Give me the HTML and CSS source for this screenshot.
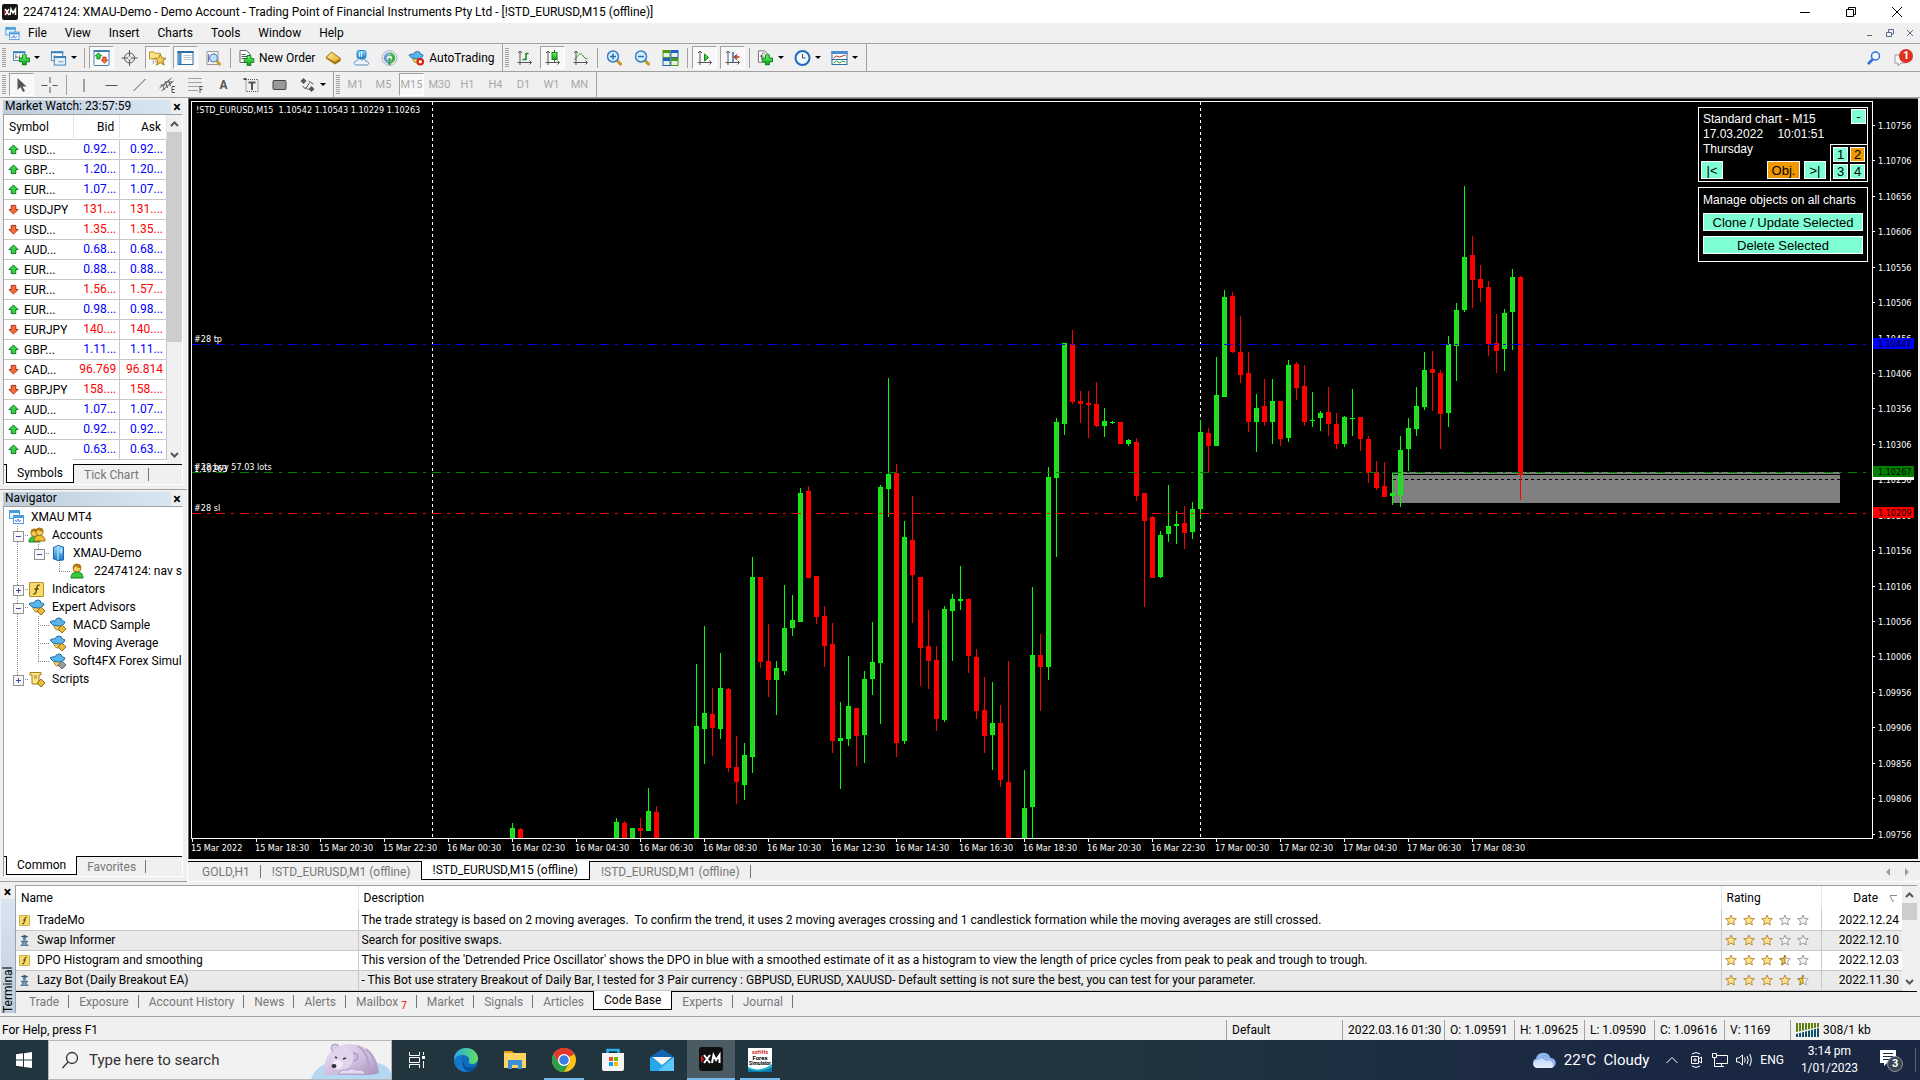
FILE: index.html
```html
<!DOCTYPE html>
<html lang="en">
<head>
  <meta charset="UTF-8">
  <title>22474124: XMAU-Demo - Demo Account</title>
  <meta name="viewport" content="width=device-width, initial-scale=1.0">
  <link rel="stylesheet" href="styles.css">
</head>
<body>
  <!-- Shared icons -->
  <svg class="defs" aria-hidden="true">
    <defs>
      <linearGradient id="gGreen" x1="0" y1="0" x2="0" y2="1"><stop offset="0" stop-color="#6dff6d"/><stop offset="1" stop-color="#0a9a1a"/></linearGradient>
      <linearGradient id="gGold" x1="0" y1="0" x2="1" y2="1"><stop offset="0" stop-color="#fff0a0"/><stop offset="1" stop-color="#e0a820"/></linearGradient>
      <linearGradient id="gBlue" x1="0" y1="0" x2="0" y2="1"><stop offset="0" stop-color="#9adcff"/><stop offset="1" stop-color="#1d78c8"/></linearGradient>
      <symbol id="up" viewBox="0 0 12 12"><path d="M6 1L11 6H8.500V10.500H3.500V6H1Z" fill="#35d04a" stroke="#126b1c"/></symbol>
      <symbol id="down" viewBox="0 0 12 12"><path d="M6 11L11 6H8.500V1.500H3.500V6H1Z" fill="#f8683a" stroke="#9c2a08"/></symbol>
      <symbol id="star" viewBox="0 0 12 12"><path d="M6 1L7.500 4.500L11.300 4.700L8.500 7.300L9.300 11L6 9L2.700 11L3.500 7.300L.7 4.700L4.500 4.500Z" fill="#ffe58a" stroke="#b88a3c"/></symbol>
      <symbol id="star0" viewBox="0 0 12 12"><path d="M6 1L7.500 4.500L11.300 4.700L8.500 7.300L9.300 11L6 9L2.700 11L3.500 7.300L.7 4.700L4.500 4.500Z" fill="#f4f4f4" stroke="#9a9a9a"/></symbol>
      <symbol id="starh" viewBox="0 0 12 12"><path d="M6 1L7.500 4.500L11.300 4.700L8.500 7.300L9.300 11L6 9L2.700 11L3.500 7.300L.7 4.700L4.500 4.500Z" fill="#fff" stroke="#a5a5a5"/><path d="M6 1V9L2.700 11L3.500 7.300L.7 4.700L4.500 4.500Z" fill="#f4c93c" stroke="#a87a20"/></symbol>
      <symbol id="fx" viewBox="0 0 14 14"><rect x=".5" y=".5" width="13" height="13" rx="1" fill="#f8dc68" stroke="#b8922c"/><path d="M10 3C7.500 2.500 7.500 4 7 7S6 11.500 4 11M5 6.500H9" fill="none" stroke="#55451a" stroke-width="1.300"/></symbol>
      <symbol id="hat" viewBox="0 0 18 16"><path d="M5 7H13Q13 13 9 13T5 7" fill="#f6d25a" stroke="#a5801c"/><path d="M1 5Q4 3 6 4Q7 1 10 1Q13 1 13 4Q15 4 16 5Q15 9 9 9T1 5Z" fill="#5ab6ea" stroke="#1f6fa8"/></symbol>
      <symbol id="ea" viewBox="0 0 18 16"><use href="#hat" width="18" height="16"/><path d="M13 8L17 12L13 16L9 12Z" fill="#e5b93c" stroke="#96701a"/></symbol>
      <symbol id="eagrey" viewBox="0 0 18 16"><use href="#hat" width="18" height="16"/><path d="M13 8L17 12L13 16L9 12Z" fill="#9a9a9a" stroke="#6a6a6a"/></symbol>
      <symbol id="robot" viewBox="0 0 14 14"><path d="M2 2L7 0L12 2L7 4Z" fill="#2e5d86"/><path d="M5 4H9V7H5Z" fill="#5d88aa"/><path d="M3 8H11L9 11L12 14H2L5 11Z" fill="#7ba0bd" stroke="#274f74"/></symbol>
      <symbol id="windows" viewBox="0 0 16 16"><rect x="1.500" y="1.500" width="10" height="8" fill="#e8f4ff" stroke="#4a9cdc"/><path d="M1 3H12" stroke="#4a9cdc" stroke-width="2"/><rect x="5.500" y="6.500" width="10" height="8" fill="#fff" stroke="#4a9cdc"/><path d="M5 8H16" stroke="#4a9cdc" stroke-width="2"/><path d="M7 11L8.500 13L10 10L11.500 13L13 11" fill="none" stroke="#5a78d8"/></symbol>
      <symbol id="plus" viewBox="0 0 12 12"><path d="M4 .5H8V4H11.500V8H8V11.500H4V8H.5V4H4Z" fill="url(#gGreen)" stroke="#0a7a14"/></symbol>
      <symbol id="axes" viewBox="0 0 16 16"><path d="M3.500 1V15M1 12.500H15M1.500 3L3.500 1L5.500 3M13 10.500L15 12.500L13 14.500" fill="none" stroke="#555"/></symbol>
      <symbol id="person" viewBox="0 0 14 16"><path d="M1 15Q1 9 7 9T13 15Z" fill="#36c83c" stroke="#15801c"/><circle cx="7" cy="5" r="4" fill="#f8cf58" stroke="#9c7210"/><path d="M3 5Q4 0 8 1T11 5Q7 5 6 3Q5 5 3 5" fill="#b07a10"/></symbol>
      <symbol id="golden" viewBox="0 0 14 16"><path d="M1 15Q1 9 7 9T13 15Z" fill="#f0c030" stroke="#8f6a10"/><circle cx="7" cy="5" r="4" fill="#f8cf58" stroke="#9c7210"/><path d="M3 5Q4 0 8 1T11 5Q7 5 6 3Q5 5 3 5" fill="#b07a10"/></symbol>
      <symbol id="lens" viewBox="0 0 16 16"><path d="M10 10L15 15" stroke="#c89a1c" stroke-width="3"/><circle cx="6.500" cy="6.500" r="5.500" fill="#d4efff" stroke="#3a80c0" stroke-width="1.500"/></symbol>
    </defs>
  </svg>

  <header class="titlebar">
    <svg class="app-icon" viewBox="0 0 16 16"><rect width="16" height="16" rx="2" fill="#151515"/><path d="M3 5L7 11M7 5L3 11M8 11L9 5L11 9L13.500 5V11" fill="none" stroke="#fff" stroke-width="1.500"/><path d="M2 6L4 9L2 11Z" fill="#e01818"/></svg>
    <h1>22474124: XMAU-Demo - Demo Account - Trading Point of Financial Instruments Pty Ltd - [!STD_EURUSD,M15 (offline)]</h1>
    <div class="window-buttons">
      <button aria-label="Minimize"><svg viewBox="0 0 10 10"><path d="M0 5.500H10"/></svg></button>
      <button aria-label="Restore"><svg viewBox="0 0 10 10"><path d="M.5 2.500H7.500V9.500H.5ZM2.500 2V.5H9.500V7.500H8"/></svg></button>
      <button aria-label="Close"><svg viewBox="0 0 10 10"><path d="M0 0L10 10M10 0L0 10"/></svg></button>
    </div>
  </header>

  <nav class="menubar">
    <svg class="menu-icon"><use href="#windows"/></svg>
    <button>File</button><button>View</button><button>Insert</button><button>Charts</button><button>Tools</button><button>Window</button><button>Help</button>
    <div class="child-buttons">
      <button aria-label="Minimize chart"><svg viewBox="0 0 8 8"><path d="M1 6.500H6"/></svg></button>
      <button aria-label="Restore chart"><svg viewBox="0 0 8 8"><path d="M.5 3.500H5.500V7.500H.5ZM2.500 3V.5H7.500V5H6"/></svg></button>
      <button aria-label="Close chart"><svg viewBox="0 0 8 8"><path d="M1 1L7 7M7 1L1 7"/></svg></button>
    </div>
  </nav>

  <div class="toolbar">
    <div class="group">
      <span class="grip"></span>
      <button class="tool wide" aria-label="New chart"><svg viewBox="0 0 18 16"><rect x=".5" y="1.500" width="12" height="9" fill="#fff" stroke="#3a80b8"/><path d="M0 2H13" stroke="#3a80b8" stroke-width="2"/><path d="M3 4V9M2 7H6M7 5V8" stroke="#777"/><use href="#plus" x="6" y="4" width="12" height="12"/></svg><i class="caret"></i></button>
      <button class="tool wide" aria-label="Profiles"><svg viewBox="0 0 18 16"><rect x="1.500" y="1.500" width="12" height="9" fill="#fff" stroke="#3a80b8"/><path d="M1 2H14" stroke="#3a80b8" stroke-width="2"/><rect x="4.500" y="6.500" width="12" height="9" fill="#e4f2ff" stroke="#3a80b8"/><path d="M4 7H17" stroke="#3a80b8" stroke-width="2"/><path d="M3 6H7M9 12H14" stroke="#888"/></svg><i class="caret"></i></button>
      <span class="sep"></span>
      <button class="tool pressed" aria-label="Market Watch"><svg viewBox="0 0 16 16"><rect x=".5" y=".5" width="15" height="15" rx="1" fill="#fff" stroke="#3a80b8"/><path d="M0 1H16" stroke="#3a80b8" stroke-width="2"/><use href="#up" x="1" y="2" width="8" height="8"/><use href="#down" x="7" y="6" width="8" height="8"/></svg></button>
      <button class="tool" aria-label="Data Window"><svg viewBox="0 0 16 16"><g fill="none" stroke="#555"><circle cx="8" cy="8" r="5"/><circle cx="8" cy="8" r="2" stroke="#aaa"/><path d="M8 0V6M8 10V16M0 8H6M10 8H16"/></g></svg></button>
      <button class="tool pressed" aria-label="Navigator"><svg viewBox="0 0 18 16"><path d="M.5 1.500H5L6 3H12V9H.5Z" fill="#fbe28a" stroke="#b98d1c"/><path d="M4.500 9V15M4 12H9" stroke="#777" stroke-dasharray="1 1"/><path d="M12 4L13.700 8L18 8.300L14.800 11L16 15.500L12 13L8 15.500L9.200 11L6 8.300L10.300 8Z" fill="url(#gGold)" stroke="#a8780c"/></svg></button>
      <button class="tool pressed" aria-label="Terminal"><svg viewBox="0 0 16 16"><rect x=".5" y="1.500" width="15" height="13" fill="#fff" stroke="#2d6ca6"/><path d="M0 2H16" stroke="#2d6ca6" stroke-width="2"/><path d="M1 3H4V14H1Z" fill="#4a8fd0"/><path d="M6 5.500H14M6 7.500H14M6 9.500H14" stroke="#b8c4d0"/></svg></button>
      <button class="tool" aria-label="Strategy Tester"><svg viewBox="0 0 16 16"><path d="M1.500 1.500H12.500V14.500H1.500Z" fill="#f6f6f6" stroke="#999"/><path d="M3 12V4M5 9V5L7 7L9 3" fill="none" stroke="#8a6ab8"/><path d="M11 11L15 15" stroke="#d09a1c" stroke-width="2.500"/><circle cx="8" cy="8" r="4" fill="#bfe0f8" stroke="#4a80b0"/></svg></button>
      <span class="sep"></span>
      <button class="tool text"><svg viewBox="0 0 16 16"><path d="M1.500 .5H8L11.500 4V12.500H1.500Z" fill="#fff" stroke="#666"/><path d="M3 4.500H7M3 6.500H9M3 8.500H9" stroke="#555"/><use href="#plus" x="5" y="5" width="11" height="11"/></svg>New Order</button>
      <button class="tool" aria-label="MetaEditor"><svg viewBox="0 0 16 16"><path d="M6 2L15 8.500V11L9.500 14.500L.5 8.500V7Z" fill="#a8700c"/><path d="M6 2L15 8.500L9.500 12.500L.5 7.500Z" fill="url(#gGold)" stroke="#a8700c"/></svg></button>
      <button class="tool" aria-label="Virtual Hosting"><svg viewBox="0 0 16 16"><rect x="3.500" y=".5" width="9" height="8" rx="2" fill="url(#gBlue)" stroke="#2a88cc"/><path d="M6 3V7M8 2V7" stroke="#e8f8ff"/><path d="M2 15Q-1 12 3 11Q5 7 8 10Q12 8 12 11Q17 12 14 15Z" fill="#e8f3fc" stroke="#5d8fc0"/></svg></button>
      <button class="tool" aria-label="Signals"><svg viewBox="0 0 16 16"><circle cx="8" cy="8" r="7.500" fill="#eaf0f4" stroke="#a5b5c0"/><path d="M8 3A5 5 0 0 1 8 13M8 5A3 3 0 0 1 9 11" fill="none" stroke="#3cb043" stroke-width="1.500"/><path d="M8 3A5 5 0 0 0 8 13M8 5A3 3 0 0 0 7 11" fill="none" stroke="#6a9cd0" stroke-width="1.500"/><path d="M8 8V15" stroke="#3a9c3a" stroke-width="2"/></svg></button>
      <button class="tool text"><svg viewBox="0 0 18 16"><use href="#hat" width="18" height="16"/><circle cx="13" cy="12" r="4" fill="#d8200c"/><rect x="11.500" y="10.500" width="3" height="3" fill="#fff"/></svg>AutoTrading</button>
    </div>
    <div class="group">
      <span class="grip"></span>
      <button class="tool" aria-label="Bar Chart"><svg viewBox="0 0 16 16"><use href="#axes"/><path d="M6 9.500H9.500M9.500 3V10M9.500 3.500H12" stroke="#15801c" stroke-width="1.500" fill="none"/></svg></button>
      <button class="tool pressed" aria-label="Candlesticks"><svg viewBox="0 0 16 16"><use href="#axes"/><path d="M10 0V12" stroke="#15801c"/><rect x="7.500" y="2.500" width="5" height="7" fill="url(#gGreen)" stroke="#15801c"/></svg></button>
      <button class="tool" aria-label="Line Chart"><svg viewBox="0 0 16 16"><use href="#axes"/><path d="M2 10Q8 1 10 5T15 9" fill="none" stroke="#2a9a30"/></svg></button>
      <span class="sep"></span>
      <button class="tool" aria-label="Zoom In"><svg viewBox="0 0 16 16"><use href="#lens"/><path d="M3.500 6.500H9.500M6.500 3.500V9.500" stroke="#2a6eb4" stroke-width="1.500"/></svg></button>
      <button class="tool" aria-label="Zoom Out"><svg viewBox="0 0 16 16"><use href="#lens"/><path d="M3.500 6.500H9.500" stroke="#2a6eb4" stroke-width="1.500"/></svg></button>
      <button class="tool" aria-label="Tile Windows"><svg viewBox="0 0 16 16"><path d="M0 0H8V8H0ZM8 8H16V16H8Z" fill="#4a9a10"/><path d="M8 0H16V8H8ZM0 8H8V16H0Z" fill="#2060c8"/><path d="M1 3H7V7H1ZM9 3H15V7H9ZM1 11H7V15H1ZM9 11H15V15H9Z" fill="#e8f0e8"/></svg></button>
      <span class="sep"></span>
      <button class="tool pressed" aria-label="Auto Scroll"><svg viewBox="0 0 16 16"><use href="#axes"/><path d="M8 4L12 7.500L8 11Z" fill="url(#gGreen)" stroke="#15801c"/></svg></button>
      <button class="tool pressed" aria-label="Chart Shift"><svg viewBox="0 0 16 16"><use href="#axes"/><path d="M8.500 2V12" stroke="#2a6eb4" stroke-width="1.500"/><path d="M15 7H10M12.500 4.500L10 7L12.500 9.500" stroke="#c0380c" stroke-width="1.500" fill="none"/></svg></button>
      <span class="sep"></span>
      <button class="tool wide" aria-label="Indicators"><svg viewBox="0 0 18 16"><path d="M1.500 .5H8L11.500 4V12.500H1.500Z" fill="#fff" stroke="#666"/><path d="M8 3Q5 2 5 6V10M3 6H7" stroke="#555" fill="none"/><use href="#plus" x="5" y="4" width="12" height="12"/></svg><i class="caret"></i></button>
      <button class="tool wide" aria-label="Periods"><svg viewBox="0 0 16 16"><circle cx="8" cy="8" r="7" fill="#f0f8ff" stroke="#1e6cc0" stroke-width="2"/><path d="M8 4V8H11" fill="none" stroke="#444"/></svg><i class="caret"></i></button>
      <button class="tool wide" aria-label="Templates"><svg viewBox="0 0 16 16"><rect x=".5" y="1.500" width="15" height="13" fill="#fff" stroke="#2d6ca6"/><path d="M0 2.500H16" stroke="#4a8fd0" stroke-width="3"/><path d="M2 8L5 6L8 7L11 6L14 5" fill="none" stroke="#b03018"/><path d="M0 9.500H16" stroke="#2d6ca6"/><path d="M2 13L5 11L8 13L11 11L14 12" fill="none" stroke="#2a9a30"/></svg><i class="caret"></i></button>
    </div>
    <div class="toolbar-right">
      <button aria-label="Search"><svg viewBox="0 0 16 16"><path d="M7 9L2 14" stroke="#2a6ed8" stroke-width="2.500"/><circle cx="9.500" cy="6" r="4" fill="#f4faff" stroke="#2a6ed8" stroke-width="1.500"/></svg></button>
      <button class="chat" aria-label="Messages"><svg viewBox="0 0 20 20"><path d="M1 7H12V15H7L4 18V15H1Z" fill="#f8f8f8" stroke="#999"/><circle cx="12" cy="8" r="7" fill="#e03020"/></svg><b>1</b></button>
    </div>
  </div>

  <div class="toolbar toolbar-lines">
    <div class="group">
      <span class="grip"></span>
      <button class="tool pressed" aria-label="Cursor"><svg viewBox="0 0 16 16"><path d="M4 1V13L7 10L9.500 15L11.500 14L9 9.500H13Z" fill="#555"/></svg></button>
      <button class="tool" aria-label="Crosshair"><svg viewBox="0 0 16 16"><path d="M8.500 0V6M8.500 10V16M0 8.500H6M11 8.500H16" stroke="#555"/></svg></button>
      <span class="sep"></span>
      <button class="tool" aria-label="Vertical line"><svg viewBox="0 0 16 16"><path d="M8.500 2V15" stroke="#555"/></svg></button>
      <button class="tool" aria-label="Horizontal line"><svg viewBox="0 0 16 16"><path d="M2 8.500H14" stroke="#555"/></svg></button>
      <button class="tool" aria-label="Trendline"><svg viewBox="0 0 16 16"><path d="M2 14L14 2" stroke="#555"/></svg></button>
      <button class="tool" aria-label="Channel"><svg viewBox="0 0 16 16"><path d="M0 11L12 1M2 14L14 4M3 8L5 13M6 5L8 11M9 3L11 9M1 8H6M5 5H13" stroke="#555" fill="none"/><path d="M15.500 9.500H12.500V15.500H15.500M12.500 12.500H15" stroke="#555" fill="none"/></svg></button>
      <button class="tool" aria-label="Fibonacci"><svg viewBox="0 0 16 16"><path d="M1 1.500H15M1 5.500H15M1 9.500H15M1 13.500H10" stroke="#555" stroke-dasharray="1 1"/><path d="M15.500 9.500H12.500V16M12.500 12.500H15" stroke="#555" fill="none"/></svg></button>
      <button class="tool letter">A</button>
      <button class="tool" aria-label="Text label"><svg viewBox="0 0 16 16"><path d="M2.500 2.500H14.500V14.500H2.500Z" fill="none" stroke="#555" stroke-dasharray="1 1"/><path d="M0 1H3V3H0Z" fill="#555"/><path d="M5 5.500H12M8.500 5V13" stroke="#555" stroke-width="2"/></svg></button>
      <button class="tool" aria-label="Rectangle"><svg viewBox="0 0 16 16"><rect x="1.500" y="3.500" width="13" height="9" rx="1" fill="#999" stroke="#444"/></svg></button>
      <button class="tool wide" aria-label="Arrows"><svg viewBox="0 0 16 16"><path d="M4 1L7 4L4 7L1 4ZM12 9L15 12L12 15L9 12Z" fill="#555"/><path d="M6 10L9 13M9 4L14 7M3 9L6 12L10 6" stroke="#555" fill="none"/></svg><i class="caret"></i></button>
    </div>
    <div class="group">
      <span class="grip"></span>
      <button class="tool tf">M1</button><button class="tool tf">M5</button><button class="tool tf pressed">M15</button><button class="tool tf">M30</button><button class="tool tf">H1</button><button class="tool tf">H4</button><button class="tool tf">D1</button><button class="tool tf">W1</button><button class="tool tf">MN</button>
    </div>
  </div>

  <main class="workspace">
    <aside class="dock">
      <section class="panel">
        <div class="panel-title"><h2>Market Watch: 23:57:59</h2><button aria-label="Close Market Watch">×</button></div>
        <div class="panel-body">
          <div class="scroll-area">
            <div class="clip">
              <table class="quotes">
                <thead><tr><th class="symbol">Symbol</th><th>Bid</th><th>Ask</th></tr></thead>
                <tbody id="quotes"></tbody>
              </table>
            </div>
            <div class="scrollbar"><svg viewBox="0 0 9 6"><path d="M1 5L4.500 1.500L8 5"/></svg><span class="thumb"></span><svg viewBox="0 0 9 6"><path d="M1 1L4.500 4.500L8 1"/></svg></div>
          </div>
          <div class="tabs"><button class="active">Symbols</button><button>Tick Chart</button></div>
        </div>
      </section>
      <section class="panel">
        <div class="panel-title"><h2>Navigator</h2><button aria-label="Close Navigator">×</button></div>
        <div class="panel-body">
          <ul class="tree">
            <li><svg class="node"><use href="#windows"/></svg>XMAU MT4</li>
            <li><i class="g box minus"></i><svg class="node"><use href="#person" x="0" y="1" width="13" height="15"/><use href="#golden" x="5" y="0" width="13" height="15"/></svg>Accounts</li>
            <li><i class="g v"></i><i class="g box minus end"></i><svg class="node" viewBox="0 0 16 16"><path d="M3.500 2.500L8 .5L13.500 2V15L8 15.500L3.500 14Z" fill="url(#gBlue)" stroke="#1868b0"/><path d="M8 1V15" stroke="#c8ecff"/><path d="M10 5H12M10 7H12" stroke="#fff"/></svg>XMAU-Demo</li>
            <li><i class="g v"></i><i class="g"></i><i class="g l"></i><svg class="node"><use href="#person" width="14" height="16"/></svg>22474124: nav sin</li>
            <li><i class="g box"></i><svg class="node"><use href="#fx" x="1" y="1" width="15" height="15"/></svg>Indicators</li>
            <li><i class="g box minus"></i><svg class="node"><use href="#ea"/></svg>Expert Advisors</li>
            <li><i class="g v"></i><i class="g t"></i><svg class="node"><use href="#ea"/></svg>MACD Sample</li>
            <li><i class="g v"></i><i class="g t"></i><svg class="node"><use href="#ea"/></svg>Moving Average</li>
            <li><i class="g v"></i><i class="g l"></i><svg class="node"><use href="#eagrey"/></svg>Soft4FX Forex Simula</li>
            <li><i class="g box end"></i><svg class="node" viewBox="0 0 18 16"><path d="M2 1.500H13V4H11V11H13V13H4V4H2Z" fill="#fbe28a" stroke="#a8801c"/><path d="M6 5H9M6 7H9" stroke="#a8801c"/><path d="M13 8L17 12L13 16L9 12Z" fill="#e5b93c" stroke="#96701a"/></svg>Scripts</li>
          </ul>
          <div class="tabs"><button class="active">Common</button><button>Favorites</button></div>
        </div>
      </section>
    </aside>

    <section class="charts">
      <div class="chart">
        <div class="plot">
          <svg id="plot"></svg>
          <div class="sim-panel">
            <div class="sim-box clock-box">
              <div class="sim-info">
                <p>Standard chart - M15</p>
                <p>17.03.2022 <span>10:01:51</span></p>
                <p>Thursday</p>
                <div class="sim-nav"><button>|&lt;</button><button class="on">Obj.</button><button>&gt;|</button></div>
              </div>
              <div class="sim-side">
                <button class="collapse">-</button>
                <div class="sim-pages"><button>1</button><button class="on">2</button><button>3</button><button>4</button></div>
              </div>
            </div>
            <div class="sim-box manage-box">
              <p>Manage objects on all charts</p>
              <button>Clone / Update Selected</button>
              <button>Delete Selected</button>
            </div>
          </div>
        </div>
        <svg id="prices"></svg>
        <svg id="times"></svg>
      </div>
      <div class="tabs chart-tabs">
        <button>GOLD,H1</button><button>!STD_EURUSD,M1 (offline)</button><button class="active">!STD_EURUSD,M15 (offline)</button><button>!STD_EURUSD,M1 (offline)</button>
        <span class="tab-arrows"><svg viewBox="0 0 6 8"><path d="M5 0V8L1 4Z"/></svg><svg viewBox="0 0 6 8"><path d="M1 0V8L5 4Z"/></svg></span>
      </div>
    </section>
  </main>

  <section class="terminal">
    <div class="terminal-side"><button aria-label="Close Terminal">×</button><span>Terminal</span></div>
    <div class="terminal-main">
      <div class="scroll-area">
        <div class="clip">
          <table class="codebase">
            <thead><tr><th class="name">Name</th><th>Description</th><th class="rating">Rating</th><th class="date">Date <svg viewBox="0 0 8 8"><path d="M1 1.500H8M1 2L4 7.500M4 7H5" fill="none" stroke="#888"/></svg></th></tr></thead>
            <tbody>
              <tr><td><svg><use href="#fx"/></svg>TradeMo</td><td>The trade strategy is based on 2 moving averages.&nbsp; To confirm the trend, it uses 2 moving averages crossing and 1 candlestick formation while the moving averages are still crossed.</td><td class="stars"><svg><use href="#star"/></svg><svg><use href="#star"/></svg><svg><use href="#star"/></svg><svg><use href="#star0"/></svg><svg><use href="#star0"/></svg></td><td class="date">2022.12.24</td></tr>
              <tr><td><svg><use href="#robot"/></svg>Swap Informer</td><td>Search for positive swaps.</td><td class="stars"><svg><use href="#star"/></svg><svg><use href="#star"/></svg><svg><use href="#star"/></svg><svg><use href="#star0"/></svg><svg><use href="#star0"/></svg></td><td class="date">2022.12.10</td></tr>
              <tr><td><svg><use href="#fx"/></svg>DPO Histogram and smoothing</td><td>This version of the 'Detrended Price Oscillator' shows the DPO in blue with a smoothed estimate of it as a histogram to view the length of price cycles from peak to peak and trough to trough.</td><td class="stars"><svg><use href="#star"/></svg><svg><use href="#star"/></svg><svg><use href="#star"/></svg><svg><use href="#starh"/></svg><svg><use href="#star0"/></svg></td><td class="date">2022.12.03</td></tr>
              <tr><td><svg><use href="#robot"/></svg>Lazy Bot (Daily Breakout EA)</td><td>- This Bot use stratery Breakout of Daily Bar, I tested for 3 Pair currency : GBPUSD, EURUSD, XAUUSD- Default setting is not sure the best, you can test for your parameter.</td><td class="stars"><svg><use href="#star"/></svg><svg><use href="#star"/></svg><svg><use href="#star"/></svg><svg><use href="#star"/></svg><svg><use href="#starh"/></svg></td><td class="date">2022.11.30</td></tr>
            </tbody>
          </table>
        </div>
        <div class="scrollbar"><svg viewBox="0 0 9 6"><path d="M1 5L4.500 1.500L8 5"/></svg><span class="thumb"></span><svg viewBox="0 0 9 6"><path d="M1 1L4.500 4.500L8 1"/></svg></div>
      </div>
      <div class="tabs">
        <button>Trade</button><button>Exposure</button><button>Account History</button><button>News</button><button>Alerts</button><button>Mailbox <sub>7</sub></button><button>Market</button><button>Signals</button><button>Articles</button><button class="active">Code Base</button><button>Experts</button><button>Journal</button>
      </div>
    </div>
  </section>

  <footer class="status">
    <span class="help">For Help, press F1</span>
    <span class="profile">Default</span>
    <span class="bar-time">2022.03.16 01:30</span>
    <span class="ohlc">O: 1.09591</span>
    <span class="ohlc">H: 1.09625</span>
    <span class="ohlc">L: 1.09590</span>
    <span class="ohlc">C: 1.09616</span>
    <span class="volume">V: 1169</span>
    <span class="traffic"><svg viewBox="0 0 23 14"><path d="M0 0H23V4L0 9Z" fill="#5d7d10"/><path d="M0 11L23 5V14H0Z" fill="#10506a"/><path d="M2.500 0V14M5.500 0V14M8.500 0V14M11.500 0V14M14.500 0V14M17.500 0V14M20.500 0V14" stroke="#f0f0f0"/></svg>308/1 kb</span>
  </footer>

  <div class="taskbar">
    <button class="start" aria-label="Start"><svg viewBox="0 0 16 16"><path d="M0 2.300L7 1.300V7.600H0ZM8 1.200L16 0V7.600H8ZM0 8.500H7V14.800L0 13.800ZM8 8.500H16V16L8 14.900Z" fill="#fff"/></svg></button>
    <label class="search">
      <svg class="search-icon" viewBox="0 0 18 18"><circle cx="11" cy="7" r="5.500" fill="none" stroke="#333" stroke-width="1.300"/><path d="M7 11L1.500 17" stroke="#333" stroke-width="1.300"/></svg>
      <input type="text" placeholder="Type here to search" aria-label="Type here to search">
      <svg class="bear" viewBox="0 0 80 36">
        <defs><linearGradient id="fur" x1="0" y1="0" x2="1" y2="1"><stop offset="0" stop-color="#ece4f4"/><stop offset=".6" stop-color="#cdbcdc"/><stop offset="1" stop-color="#a58fba"/></linearGradient></defs>
        <path d="M0 36Q6 20 24 19H60Q76 20 80 30V36Z" fill="#b4d8f2"/>
        <path d="M12 30Q14 12 22 7Q36 -3 52 4Q66 10 68 30Q60 33 44 32H16Q11 32 12 30Z" fill="url(#fur)"/>
        <path d="M47 3Q58 10 58 28M55 6Q65 14 65 27" fill="none" stroke="#b5a2ca" stroke-width="2"/>
        <circle cx="24" cy="5" r="4" fill="#d8cbe6" stroke="#b09cc4"/><circle cx="43" cy="14" r="4" fill="#cbb8dc" stroke="#a890c0"/>
        <path d="M22 9Q26 1 35 4Q45 9 42 18Q39 26 31 27Q22 27 21 22Q19 14 22 9Z" fill="#dfd4ec"/>
        <path d="M23 18Q29 15 32 20Q31 26 25 26Q21 24 23 18Z" fill="#f0eaf8"/><ellipse cx="23" cy="23" rx="2.500" ry="2" fill="#352c40"/><path d="M24 14L26 15M32 16L35 15" stroke="#3c3048" stroke-width="1.500"/>
        <path d="M28 30Q30 26 36 27Q41 24 46 27Q51 26 54 29Q54 32 48 31H32Q27 32 28 30Z" fill="#e4daf0" stroke="#b09cc4"/>
      </svg>
    </label>
    <div class="apps">
      <button aria-label="Task View"><svg viewBox="0 0 18 18" fill="none" stroke="#fff"><path d="M1.500 1V4.500H11.500V1M1.500 17V13.500H11.500V17M1.500 6.500H11.500V11.500H1.500ZM15.500 1V4M15.500 10V17"/><path d="M14 5H17V8H14Z" fill="#fff" stroke="none"/></svg></button>
      <button aria-label="Microsoft Edge"><svg viewBox="0 0 24 24"><defs><linearGradient id="edgeA" x1="0" y1="0" x2="1" y2="0"><stop offset="0" stop-color="#29a8e8"/><stop offset="1" stop-color="#60e060"/></linearGradient></defs><circle cx="12" cy="12" r="12" fill="#0f6cbd"/><path d="M0 12C0 4 6 0 12 0C19 0 24 5 24 10C24 14 21 16 18 16C15 16 14 14.500 15 13C16 9 12 7 9 7C4 7 1 10 0 12Z" fill="url(#edgeA)"/><path d="M9 7C5 12 8 22 17 23C12 25 2 24 0 13C2 8 6 7 9 7Z" fill="#1678c8"/><path d="M10 12C8 18 14 22 22 18L23.500 17C22 20 19 23 16 23.500C9 23 7 16 10 12Z" fill="#0c4f9c"/></svg></button>
      <button aria-label="File Explorer"><svg viewBox="0 0 24 24"><path d="M1 3H9L11 5V8H1Z" fill="#e0a010"/><path d="M1 5H23V20H1Z" fill="#fcd462"/><path d="M5 21V12H19V21H15V17H9V21Z" fill="#3a90d8"/></svg></button>
      <button class="running" aria-label="Google Chrome"><svg viewBox="0 0 24 24"><circle cx="12" cy="12" r="12" fill="#fbc116"/><path d="M12 12L1.600 6A12 12 0 0 1 22.400 6Z" fill="#e03a2c"/><path d="M12 6H22.400A12 12 0 0 0 1.600 6L7 15Z" fill="#e03a2c"/><path d="M1.600 6A12 12 0 0 0 12 24L17.200 15L12 17.500L6.800 15Z" fill="#2d9e4c"/><circle cx="12" cy="12" r="6" fill="#fff"/><circle cx="12" cy="12" r="4.700" fill="#3b7de8"/></svg></button>
      <button aria-label="Microsoft Store"><svg viewBox="0 0 24 24"><path d="M6.500 7V2H17.500V7" fill="none" stroke="#2ab0f0" stroke-width="2.500"/><path d="M1 5H23V21Q23 23 21 23H3Q1 23 1 21Z" fill="#f4f4f4"/><path d="M8 9H12V13H8Z" fill="#f05020"/><path d="M13 9H17V13H13Z" fill="#7fba00"/><path d="M8 14H12V18H8Z" fill="#00a4ef"/><path d="M13 14H17V18H13Z" fill="#ffb900"/></svg></button>
      <button aria-label="Mail"><svg viewBox="0 0 24 24"><path d="M0 9L12 1L24 9V12H0Z" fill="#1464b4"/><path d="M0 9L12 16L24 9V23H0Z" fill="#28a8ea"/><path d="M24 9L8 23H24Z" fill="#5cc8fa"/><path d="M2 9H22L12 17Z" fill="#f4f4f4"/></svg></button>
      <button class="running current" aria-label="XM MT4"><svg viewBox="0 0 24 24"><rect width="24" height="24" rx="3" fill="#101010"/><path d="M5 8L11 16M11 8L5 16M13 16L14.500 8L17 13L20.500 8V16" fill="none" stroke="#fff" stroke-width="2"/><path d="M2 8L5 12L2 16Z" fill="#e01818"/></svg></button>
      <button class="running" aria-label="Forex Simulator"><svg viewBox="0 0 24 24"><rect width="24" height="24" fill="#fff"/><path d="M0 19Q12 25 24 16V24H0Z" fill="#18b8d0"/><path d="M0 21Q12 26 24 19V24H0Z" fill="#1078a8"/><text x="12" y="6" font-size="5" fill="#d02020">soft4fx</text><text x="12" y="12" font-size="6">Forex</text><text x="12" y="17" font-size="5">Simulator</text></svg></button>
    </div>
    <div class="tray">
      <button class="weather"><svg viewBox="0 0 24 16"><defs><linearGradient id="cloud" x1="0" y1="0" x2="0" y2="1"><stop offset="0" stop-color="#c4daf8"/><stop offset="1" stop-color="#e4eefc"/></linearGradient></defs><path d="M5 16A5 5 0 0 1 4 6.500A7.500 7.500 0 0 1 18.500 6A5 5 0 0 1 19 16Z" fill="#8fb2ec"/><path d="M5 16A4 4 0 0 1 6 8Q10 5 14 9Q20 7 21 12Q22 16 18 16Z" fill="url(#cloud)"/></svg>22°C&nbsp; Cloudy</button>
      <button aria-label="Show hidden icons"><svg class="line" viewBox="0 0 16 16"><path d="M2.500 11L8 5.500L13.500 11"/></svg></button>
      <button aria-label="Meet Now"><svg class="line" viewBox="0 0 16 16"><path d="M4 2Q8 -1 12 2M4 14Q8 17 12 14M3.500 4.500H10.500V11.500H3.500ZM10.500 7L13.500 5V11L10.500 9M6 7H8V9H6Z"/></svg></button>
      <button aria-label="Network"><svg class="line" viewBox="0 0 16 16"><path d="M4 3.500H15.500V11.500H4M.5 1.500H4.500V5.500H.5ZM2.500 5.500V14.500H12M9.500 11.500V14.500"/></svg></button>
      <button aria-label="Volume"><svg class="line" viewBox="0 0 16 16"><path d="M.5 6V10H3L6.500 13V3L3 6ZM8.500 5.500Q10 8 8.500 10.500M11 4Q13.500 8 11 12M13.500 2Q17 8 13.500 14"/></svg></button>
      <button class="lang">ENG</button>
      <button class="clock">3:14 pm<br>1/01/2023</button>
      <button class="notify" aria-label="Notifications"><svg viewBox="0 0 24 24"><path d="M1 2H17V15H8L5 18V15H1Z" fill="#fff"/><path d="M4 5.500H14M4 8.500H14M4 11.500H10" stroke="#1b2845"/><circle cx="16" cy="16" r="7.500" fill="#3a4350" stroke="#8a929c"/></svg><b>3</b></button>
    </div>
  </div>

  <script src="chart.js"></script>
</body>
</html>
```
FILE: styles.css
```css
* {
  box-sizing: border-box;
}

body {
  margin: 0;
  height: 100vh;
  display: flex;
  flex-direction: column;
  overflow: hidden;
  background: #f0f0f0;
  color: #000;
  font: 12px/16px Roboto, "Open Sans", sans-serif;
}

h1, h2, p, ul {
  margin: 0;
  padding: 0;
  font-size: inherit;
  font-weight: normal;
}

button {
  margin: 0;
  padding: 0;
  border: 0;
  background: none;
  color: inherit;
  font: inherit;
  white-space: nowrap;
}

svg {
  display: block;
  flex: none;
}

.defs {
  position: absolute;
  width: 0;
  height: 0;
}

/* Title and menu */
.titlebar {
  display: flex;
  align-items: center;
  height: 23px;
  padding-left: 2px;
  background: #fff;
}

.app-icon {
  width: 16px;
  height: 16px;
  margin-right: 5px;
}

.window-buttons {
  display: flex;
  margin-left: auto;
}

.window-buttons button {
  width: 46px;
  display: flex;
  justify-content: center;
}

.window-buttons svg {
  width: 10px;
  height: 10px;
  fill: none;
  stroke: #000;
}

.menubar {
  display: flex;
  align-items: center;
  height: 20px;
  padding-left: 4px;
}

.menubar > button {
  padding: 0 9px;
}

.menu-icon {
  width: 16px;
  height: 15px;
  margin-right: -1px;
}

.child-buttons {
  display: flex;
  gap: 12px;
  margin-left: auto;
  padding-right: 6px;
}

.child-buttons svg {
  width: 8px;
  height: 8px;
  fill: none;
  stroke: #5a6c88;
}

/* Toolbars */
.toolbar {
  display: flex;
  height: 28px;
  border-top: 1px solid #a0a0a0;
}

.toolbar-lines {
  height: 27px;
  border-bottom: 1px solid #a0a0a0;
}

.group {
  display: flex;
  align-items: center;
  gap: 3px;
  padding: 1px 4px 1px 2px;
  border-right: 1px solid #a0a0a0;
}

.grip {
  width: 4px;
  height: 20px;
  background: repeating-linear-gradient(#a0a0a0 0 1px, #f0f0f0 1px 2px);
}

.sep {
  width: 1px;
  height: 20px;
  margin: 0 1px;
  background: #a0a0a0;
}

.tool {
  display: flex;
  align-items: center;
  justify-content: center;
  width: 25px;
  height: 23px;
}

.tool svg {
  width: 17px;
  height: 16px;
}

.tool.wide {
  width: 34px;
  gap: 4px;
}

.tool.text {
  width: auto;
  gap: 4px;
  padding: 0 3px;
}

.tool.pressed {
  border: 1px solid;
  border-color: #a0a0a0 #fff #fff #a0a0a0;
  background: #f8f8f8;
}

.tool.letter {
  color: #555;
  font-weight: bold;
}

.tool.tf {
  color: #a8a8a8;
  font-size: 11px;
}

.caret {
  border: 3px solid transparent;
  border-top-color: #000;
  border-bottom: 0;
}

.toolbar-right {
  display: flex;
  align-items: center;
  gap: 12px;
  margin-left: auto;
  padding-right: 6px;
}

.toolbar-right svg {
  width: 16px;
  height: 16px;
}

.chat {
  position: relative;
}

.toolbar-right .chat svg {
  width: 20px;
  height: 20px;
}

.chat b {
  position: absolute;
  top: 0;
  left: 9px;
  color: #fff;
  font-size: 11px;
}

/* Docked panels */
.workspace {
  flex: 1;
  display: flex;
  min-height: 0;
}

.dock {
  width: 188px;
  flex: none;
  display: flex;
  flex-direction: column;
  border-right: 1px solid #fff;
}

.panel {
  flex: 1;
  min-height: 0;
  display: flex;
  flex-direction: column;
  padding: 2px 4px 4px 3px;
  border-bottom: 1px solid #a0a0a0;
}

.panel-title {
  display: flex;
  height: 14px;
  line-height: 13px;
}

.panel-title h2 {
  flex: 1;
  padding-left: 2px;
  background: linear-gradient(90deg, #bfcddb, #d8e5f3);
}

.panel-title button {
  width: 12px;
  font-size: 14px;
  font-weight: bold;
}

.panel-body {
  flex: 1;
  min-height: 0;
  display: flex;
  flex-direction: column;
  border: 1px solid;
  border-color: #a0a0a0 #fff #fff #a0a0a0;
}

.scroll-area {
  flex: 1;
  min-height: 0;
  display: flex;
  background: #fff;
}

.clip {
  flex: 1;
  min-width: 0;
  overflow: hidden;
}

table {
  width: 100%;
  border-collapse: collapse;
  table-layout: fixed;
}

th {
  font-weight: normal;
}

.quotes th {
  height: 24px;
  padding: 0 5px;
  border-right: 1px solid #e5e5e5;
  text-align: right;
}

.quotes .symbol {
  width: 69px;
  text-align: left;
}

.quotes td {
  height: 20px;
  padding: 0 3px;
  border: 1px solid #c8c8c8;
  border-left: 0;
  text-align: right;
  white-space: nowrap;
}

.quotes td:first-child {
  display: flex;
  align-items: center;
  gap: 5px;
  padding-left: 4px;
  border: 0;
  border-top: 1px solid #c8c8c8;
}

.quotes td svg {
  width: 11px;
  height: 11px;
}

.quotes .rise {
  color: #00f;
}

.quotes .fall {
  color: #f00;
}

.scrollbar {
  display: flex;
  flex-direction: column;
  align-items: center;
  justify-content: space-between;
  width: 15px;
  padding: 6px 0;
  background: #f0f0f0;
}

.scrollbar svg {
  width: 9px;
  height: 6px;
  fill: none;
  stroke: #555;
  stroke-width: 2;
}

.thumb {
  width: 15px;
  height: 210px;
  margin: 5px 0 auto;
  background: #cdcdcd;
}

.tabs {
  display: flex;
  height: 22px;
  padding-left: 3px;
  border-top: 1px solid #000;
  background: #f0f0f0;
  color: #777;
}

.tabs button {
  height: 19px;
  padding: 0 10px;
  background: linear-gradient(#777, #777) right center / 1px 13px no-repeat;
}

.tabs .active {
  margin: -1px 0 0 -1px;
  border: 1px solid #000;
  border-top: 0;
  background: #fff;
  color: #000;
}

.tabs sub {
  color: #f00;
  font-size: 10px;
  line-height: 1px;
}

.panel .tabs {
  height: 20px;
}

/* Navigator tree */
.tree {
  flex: 1;
  min-height: 0;
  padding-top: 1px;
  overflow: hidden;
  background: #fff;
  list-style: none;
}

.tree li {
  display: flex;
  align-items: center;
  height: 18px;
  padding-left: 3px;
  white-space: nowrap;
}

.node {
  width: 18px;
  height: 16px;
  margin-right: 6px;
}

/* Guide cells: v line through, t branch, l last branch */
.g {
  width: 21px;
  height: 18px;
  flex: none;
  background: repeating-linear-gradient(#888 0 1px, #fff 1px 2px) 10px 0 / 1px 100% no-repeat;
}

.g:not([class*=" "]) {
  background: none;
}

.g.t, .g.box {
  background:
    repeating-linear-gradient(#888 0 1px, #fff 1px 2px) 10px 0 / 1px 100% no-repeat,
    repeating-linear-gradient(90deg, #888 0 1px, #fff 1px 2px) 10px 9px / 11px 1px no-repeat;
}

.g.l, .g.end {
  background:
    repeating-linear-gradient(#888 0 1px, #fff 1px 2px) 10px 0 / 1px 9px no-repeat,
    repeating-linear-gradient(90deg, #888 0 1px, #fff 1px 2px) 10px 9px / 11px 1px no-repeat;
}

.g.box::before {
  content: "";
  display: block;
  width: 9px;
  height: 9px;
  margin: 5px 6px;
  border: 1px solid #919191;
  background:
    linear-gradient(#3c50a0, #3c50a0) center / 5px 1px no-repeat,
    linear-gradient(#3c50a0, #3c50a0) center / 1px 5px no-repeat,
    #f8f8f8;
}

.g.minus::before {
  background: linear-gradient(#3c50a0, #3c50a0) center / 5px 1px no-repeat, #f8f8f8;
}

/* Chart */
.charts {
  flex: 1;
  min-width: 0;
  display: flex;
  flex-direction: column;
}

.chart {
  flex: 1;
  min-height: 0;
  display: grid;
  grid-template: minmax(0, 1fr) 20px / minmax(0, 1fr) 45px;
  margin-right: 2px;
  padding: 2px 0 0 2px;
  border-top: 1px solid #696969;
  border-left: 1px solid #696969;
  background: #000;
  color: #fff;
}

.plot {
  position: relative;
  border: 1px solid #fff;
}

.chart svg {
  width: 100%;
  height: 100%;
}

.chart text {
  fill: #fff;
  font: 9px "DejaVu Sans Condensed", "DejaVu Sans", sans-serif;
}

#times {
  grid-column: 1 / 3;
}

.sim-panel {
  position: absolute;
  top: 5px;
  right: 4px;
  width: 170px;
  font: 12px/15px "Liberation Sans", Arial, sans-serif;
}

.sim-box {
  height: 75px;
  margin-bottom: 5px;
  border: 1px solid #fff;
  background: #000;
}

.sim-box button {
  height: 18px;
  border: 1px solid #fff;
  background: #7fffd4;
  color: #000;
  font-size: 13px;
}

.sim-box .on {
  background: #f09800;
}

.clock-box {
  display: flex;
}

.sim-info {
  flex: 1;
  padding: 4px 0 0 2px;
}

.sim-info p {
  padding-left: 2px;
  white-space: nowrap;
}

.sim-info span {
  margin-left: 11px;
}

.sim-nav {
  display: flex;
  gap: 4px;
  margin-top: 4px;
}

.sim-nav button {
  width: 22px;
}

.sim-nav .on {
  width: 33px;
  margin-left: auto;
}

.sim-nav button:last-child {
  margin-right: 4px;
}

.sim-side {
  width: 37px;
  display: flex;
  flex-direction: column;
  justify-content: space-between;
}

.sim-side .collapse {
  width: 15px;
  height: 15px;
  margin: 1px 1px 0 auto;
  line-height: 12px;
}

.sim-pages {
  display: grid;
  grid-template-columns: 15px 15px;
  gap: 2px;
  padding: 2px;
  border: 1px solid #fff;
  border-width: 1px 0 0 1px;
}

.sim-pages button {
  height: 15px;
  line-height: 13px;
}

.manage-box {
  display: flex;
  flex-direction: column;
  gap: 5px;
  padding: 5px 4px;
  white-space: nowrap;
}

.chart-tabs {
  height: 21px;
  margin-top: 2px;
  border-bottom: 1px solid #fff;
}

.chart-tabs button {
  padding: 0 11px;
}

.tab-arrows {
  display: flex;
  align-items: center;
  gap: 13px;
  margin-left: auto;
  padding-right: 10px;
}

.tab-arrows svg {
  width: 6px;
  height: 8px;
  fill: #999;
}

/* Terminal */
.terminal {
  display: flex;
  height: 132px;
  margin-top: 3px;
  padding-bottom: 3px;
  border-bottom: 1px solid #a0a0a0;
}

.terminal-side {
  display: flex;
  flex-direction: column;
  align-items: center;
  width: 16px;
  border-right: 1px solid #a0a0a0;
}

.terminal-side button {
  height: 14px;
  font-size: 14px;
  font-weight: bold;
  line-height: 12px;
}

.terminal-side span {
  flex: 1;
  width: 14px;
  line-height: 14px;
  background: linear-gradient(#bfcddb, #d8e5f3);
  writing-mode: vertical-rl;
  transform: rotate(180deg);
}

.terminal-main {
  flex: 1;
  min-width: 0;
  display: flex;
  flex-direction: column;
  margin-right: 3px;
  border-top: 1px solid #a0a0a0;
}

.terminal .thumb {
  height: 17px;
}

.codebase th {
  height: 24px;
  padding: 0 5px;
  border-right: 1px solid #e5e5e5;
  text-align: left;
}

.codebase .name {
  width: 342px;
}

.codebase .rating {
  width: 100px;
}

.codebase .date {
  width: 81px;
  border-right: 0;
  text-align: right;
}

.codebase .date svg {
  display: inline-block;
  width: 8px;
  height: 8px;
  margin-left: 8px;
}

.codebase td {
  height: 20px;
  padding: 0 3px;
  border-right: 1px solid #c8c8c8;
  border-bottom: 1px solid #c8c8c8;
  overflow: hidden;
  white-space: nowrap;
}

.codebase tr:nth-child(even) {
  background: #eaeaea;
}

.codebase td:first-child svg {
  display: inline-block;
  width: 11px;
  height: 11px;
  margin-right: 7px;
  vertical-align: -2px;
}

.stars svg {
  display: inline-block;
  width: 12px;
  height: 12px;
  margin-right: 6px;
  vertical-align: -2px;
}

/* Status bar */
.status {
  display: flex;
  align-items: center;
  height: 23px;
  padding-top: 2px;
}

.status span {
  padding-left: 5px;
  border-left: 1px solid #a0a0a0;
  line-height: 20px;
}

.status .help {
  flex: 1;
  padding-left: 2px;
  border: 0;
}

.status .profile {
  width: 116px;
}

.status .bar-time {
  width: 102px;
}

.status .ohlc {
  width: 70px;
}

.status .volume {
  width: 66px;
}

.status .traffic {
  display: flex;
  align-items: center;
  gap: 4px;
  width: 130px;
}

.traffic svg {
  width: 23px;
  height: 14px;
}

/* Taskbar */
.taskbar {
  display: flex;
  height: 40px;
  background: linear-gradient(90deg, #22353e, #20343f 60%, #1a2743 85%);
  color: #fff;
}

.start {
  width: 48px;
  padding: 0 16px;
}

.start svg {
  width: 16px;
  height: 16px;
}

.search {
  display: flex;
  align-items: center;
  width: 344px;
  padding-left: 12px;
  border: 1px solid #b8b8b8;
  background: #f2f2f2;
}

.search-icon {
  width: 18px;
  height: 18px;
}

.search input {
  flex: 1;
  min-width: 0;
  padding: 0 0 0 10px;
  border: 0;
  background: none;
  font: 15px Roboto, sans-serif;
}

.search input::placeholder {
  color: #333;
}

.bear {
  align-self: flex-end;
  width: 80px;
  height: 36px;
}

.apps {
  display: flex;
  gap: 1px;
  padding-left: 1px;
}

.apps button {
  display: flex;
  align-items: center;
  justify-content: center;
  width: 48px;
}

.apps svg {
  width: 24px;
  height: 24px;
}

.apps button:first-child svg {
  width: 18px;
  height: 18px;
}

.apps text {
  font-weight: bold;
  text-anchor: middle;
}

.running {
  background: linear-gradient(#76b9ed, #76b9ed) center bottom / 40px 2px no-repeat;
}

.running.current {
  border-bottom: 2px solid #76b9ed;
  background: #4a5b63;
}

.tray {
  display: flex;
  align-items: center;
  gap: 8px;
  margin-left: auto;
  padding-right: 4px;
}

.tray svg {
  width: 16px;
  height: 16px;
}

.tray .line {
  fill: none;
  stroke: #fff;
}

.weather {
  display: flex;
  align-items: center;
  gap: 8px;
  margin-right: 7px;
  font-size: 15px;
}

.tray .weather svg {
  width: 24px;
}

.clock {
  margin-left: 9px;
  line-height: 17px;
}

.notify {
  position: relative;
  width: 50px;
  padding-left: 13px;
  border-right: 1px solid #56617a;
}

.tray .notify svg {
  width: 24px;
  height: 24px;
}

.notify b {
  position: absolute;
  top: 8px;
  left: 26px;
  font-size: 11px;
}
```
FILE: chart.js
```js
// Market Watch rows: direction, symbol, bid, ask
const quotes = [
  ["up", "USD...", "0.92...", "0.92..."],
  ["up", "GBP...", "1.20...", "1.20..."],
  ["up", "EUR...", "1.07...", "1.07..."],
  ["down", "USDJPY", "131....", "131...."],
  ["down", "USD...", "1.35...", "1.35..."],
  ["up", "AUD...", "0.68...", "0.68..."],
  ["up", "EUR...", "0.88...", "0.88..."],
  ["down", "EUR...", "1.56...", "1.57..."],
  ["up", "EUR...", "0.98...", "0.98..."],
  ["down", "EURJPY", "140....", "140...."],
  ["up", "GBP...", "1.11...", "1.11..."],
  ["down", "CAD...", "96.769", "96.814"],
  ["down", "GBPJPY", "158....", "158...."],
  ["up", "AUD...", "1.07...", "1.07..."],
  ["up", "AUD...", "0.92...", "0.92..."],
  ["up", "AUD...", "0.63...", "0.63..."]
];

document.getElementById("quotes").innerHTML = quotes.map(([dir, symbol, bid, ask]) => {
  const cls = dir === "up" ? "rise" : "fall";
  return `<tr><td><svg><use href="#${dir}"/></svg>${symbol}</td><td class="${cls}">${bid}</td><td class="${cls}">${ask}</td></tr>`;
}).join("");

// Candles: bar number, colour, high, body top, body bottom, low
const candles = [
  [40, "g", 823, 828, 840, 840], [41, "r", 828, 829, 840, 840],
  [53, "g", 818, 822, 840, 840], [54, "r", 821, 823, 840, 840],
  [55, "g", 828, 828, 840, 840], [56, "r", 818, 828, 831, 840],
  [57, "g", 788, 811, 831, 831], [58, "r", 806, 812, 840, 840],
  [63, "g", 664, 726, 840, 840], [64, "g", 626, 713, 729, 764],
  [65, "r", 688, 714, 728, 756], [66, "g", 653, 688, 729, 739],
  [67, "r", 688, 689, 768, 772], [68, "r", 736, 767, 782, 804],
  [69, "g", 743, 755, 785, 800], [70, "g", 557, 577, 757, 773],
  [71, "r", 577, 577, 662, 668], [72, "r", 624, 661, 680, 697],
  [73, "g", 661, 668, 680, 715], [74, "g", 585, 628, 671, 675],
  [75, "g", 595, 620, 628, 636], [76, "g", 488, 493, 622, 622],
  [77, "r", 486, 491, 578, 578], [78, "r", 576, 576, 617, 624],
  [79, "r", 606, 616, 646, 667], [80, "r", 623, 644, 741, 753],
  [81, "g", 702, 738, 741, 789], [82, "g", 656, 706, 739, 746],
  [83, "r", 708, 708, 736, 766], [84, "g", 671, 679, 735, 763],
  [85, "g", 622, 662, 679, 695], [86, "g", 485, 487, 663, 724],
  [87, "g", 378, 474, 489, 517], [88, "r", 464, 473, 743, 757],
  [89, "g", 521, 537, 741, 744], [90, "r", 496, 540, 575, 623],
  [91, "r", 577, 577, 648, 686], [92, "r", 610, 646, 661, 689],
  [93, "r", 646, 660, 719, 731], [94, "g", 606, 609, 720, 722],
  [95, "g", 594, 599, 611, 661], [96, "g", 566, 599, 601, 610],
  [97, "r", 598, 599, 656, 673], [98, "r", 649, 657, 711, 719],
  [99, "r", 677, 710, 736, 753], [100, "g", 682, 723, 735, 770],
  [101, "r", 705, 723, 780, 787], [102, "r", 661, 782, 840, 840],
  [104, "g", 770, 808, 840, 840], [105, "g", 587, 655, 807, 840],
  [106, "r", 634, 655, 667, 711], [107, "g", 467, 477, 667, 680],
  [108, "g", 418, 422, 478, 557], [109, "g", 343, 343, 424, 435],
  [110, "r", 330, 344, 402, 404], [111, "r", 391, 401, 404, 423],
  [112, "r", 391, 403, 405, 438], [113, "r", 382, 404, 426, 427],
  [114, "g", 408, 421, 426, 437], [115, "g", 421, 422, 423, 424],
  [116, "r", 422, 422, 444, 444], [117, "g", 439, 440, 444, 446],
  [118, "r", 438, 442, 496, 501], [119, "r", 493, 493, 521, 607],
  [120, "r", 516, 517, 578, 578], [121, "g", 531, 535, 577, 578],
  [122, "g", 485, 526, 534, 542], [123, "g", 511, 524, 526, 544],
  [124, "r", 506, 523, 533, 549], [125, "g", 502, 509, 532, 539],
  [126, "g", 420, 432, 509, 519], [127, "r", 428, 433, 446, 472],
  [128, "g", 357, 395, 446, 446], [129, "g", 290, 297, 397, 397],
  [130, "r", 292, 296, 352, 353], [131, "r", 316, 352, 375, 383],
  [132, "r", 352, 373, 422, 432], [133, "g", 394, 408, 422, 452],
  [134, "r", 379, 406, 422, 426], [135, "g", 379, 401, 422, 444],
  [136, "r", 401, 401, 439, 446], [137, "g", 360, 365, 438, 442],
  [138, "r", 362, 364, 388, 400], [139, "r", 365, 386, 422, 426],
  [140, "g", 392, 420, 421, 427], [141, "g", 411, 413, 418, 431],
  [142, "r", 387, 412, 424, 436], [143, "r", 413, 424, 444, 449],
  [144, "g", 416, 417, 444, 447], [145, "g", 389, 418, 419, 436],
  [146, "r", 417, 417, 439, 451], [147, "r", 436, 439, 473, 483],
  [148, "r", 461, 472, 488, 490], [149, "r", 462, 486, 497, 497],
  [150, "g", 472, 493, 496, 505], [151, "g", 436, 450, 495, 507],
  [152, "g", 418, 428, 449, 471], [153, "g", 387, 406, 429, 436],
  [154, "g", 352, 370, 407, 410], [155, "r", 351, 369, 373, 411],
  [156, "r", 370, 373, 414, 449], [157, "g", 336, 344, 413, 427],
  [158, "g", 303, 310, 346, 381], [159, "g", 186, 257, 310, 312],
  [160, "r", 236, 255, 280, 308], [161, "r", 265, 279, 288, 302],
  [162, "r", 281, 287, 344, 356], [163, "r", 314, 343, 351, 373],
  [164, "g", 309, 313, 349, 371], [165, "g", 269, 277, 312, 350],
  [166, "r", 276, 277, 475, 500]
];

const BAR = 8;
const TOP = 102;

function rect(x, y, w, h, fill) {
  return `<rect x="${x}" y="${y - TOP}" width="${w}" height="${h}" fill="${fill}"/>`;
}

function text(x, y, value, fill = "#fff") {
  return `<text x="${x}" y="${y}" style="fill:${fill}">${value}</text>`;
}

function level(y, color) {
  return `<path d="M0 ${y - TOP + 0.5}H1674" stroke="${color}" stroke-dasharray="9 6 3 6"/>`;
}

let plot = "";
plot += rect(1201, 472, 447, 31, "#808080");
plot += rect(1201, 474, 447, 1, "#000");
plot += `<path d="M1201 377.5H1648" stroke="#000" stroke-dasharray="3 3"/>`;

// Day separators
[240, 1008].forEach(x => {
  plot += `<path d="M${x + 0.5} 0V736" stroke="#fff" stroke-dasharray="3 3"/>`;
});

candles.forEach(([n, color, high, top, bottom, low]) => {
  const x = n * BAR;
  const line = color === "g" ? "#00ff00" : "#ff0000";
  plot += rect(x, high, 1, low - high, line);
  plot += rect(x - 2, top, 5, bottom - top, line);
  if (color === "g" && bottom - top > 2) {
    plot += rect(x - 1, top + 1, 3, bottom - top - 2, "#32cd32");
  }
});

plot += level(344, "#0000ff") + level(472, "#008000") + level(513, "#ff0000");
plot += text(4, 11, "!STD_EURUSD,M15&#160; 1.10542 1.10543 1.10229 1.10263");
plot += text(2, 240, "#28 tp") + text(2, 368, "#28 buy 57.03 lots") + text(2, 370, "1.10263") + text(2, 409, "#28 sl");
document.getElementById("plot").innerHTML = plot;

// Price scale
let prices = "";
for (let i = 0; i <= 20; i++) {
  const y = Math.round(24 + i * 35.43);
  prices += `<rect x="0" y="${y}" width="2" height="1" fill="#fff"/>`;
  prices += text(5, y + 4, (1.10756 - i * 0.0005).toFixed(5));
}
prices += `<rect x="0" y="375" width="41" height="4" fill="#fff"/>`;
[[344, "#0000ff", "1.10447"], [472, "#008000", "1.10267"], [513, "#ff0000", "1.10209"]].forEach(([y, color, label]) => {
  prices += rect(0, y - 5, 41, 11, color) + text(5, y - TOP + 4, label, "#000");
});
document.getElementById("prices").innerHTML = prices;

// Time scale
const times = ["15 Mar 2022", "15 Mar 18:30", "15 Mar 20:30", "15 Mar 22:30", "16 Mar 00:30", "16 Mar 02:30",
  "16 Mar 04:30", "16 Mar 06:30", "16 Mar 08:30", "16 Mar 10:30", "16 Mar 12:30", "16 Mar 14:30", "16 Mar 16:30",
  "16 Mar 18:30", "16 Mar 20:30", "16 Mar 22:30", "17 Mar 00:30", "17 Mar 02:30", "17 Mar 04:30", "17 Mar 06:30", "17 Mar 08:30"];
document.getElementById("times").innerHTML = times.map((label, i) =>
  `<rect x="${i * 64 + 1}" y="0" width="1" height="3" fill="#fff"/>` + text(i * 64, 12, label)
).join("");
```
